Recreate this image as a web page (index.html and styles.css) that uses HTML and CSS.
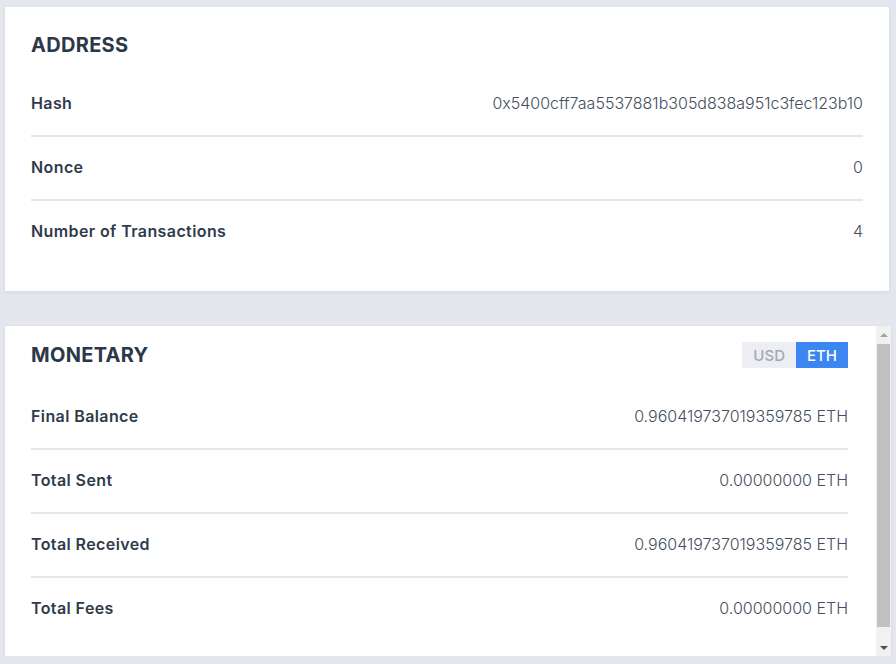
FILE: index.html
```html
<!DOCTYPE html>
<html lang="en">
<head>
    <meta charset="UTF-8">
    <title>Address</title>
    <link rel="stylesheet" href="styles.css">
</head>
<body>
    <div class="card">
        <h2 class="card-title">ADDRESS</h2>
        <div class="row">
            <span class="label">Hash</span>
            <span class="value">0x5400cff7aa5537881b305d838a951c3fec123b10</span>
        </div>
        <div class="row">
            <span class="label">Nonce</span>
            <span class="value">0</span>
        </div>
        <div class="row">
            <span class="label">Number of Transactions</span>
            <span class="value">4</span>
        </div>
    </div>

    <div class="card monetary">
        <div class="scroll-content">
            <div class="card-header">
                <h2 class="card-title">MONETARY</h2>
                <div class="toggle">
                    <button class="toggle-btn">USD</button>
                    <button class="toggle-btn selected">ETH</button>
                </div>
            </div>
            <div class="row">
                <span class="label">Final Balance</span>
                <span class="value">0.960419737019359785 ETH</span>
            </div>
            <div class="row">
                <span class="label">Total Sent</span>
                <span class="value">0.00000000 ETH</span>
            </div>
            <div class="row">
                <span class="label">Total Received</span>
                <span class="value">0.960419737019359785 ETH</span>
            </div>
            <div class="row">
                <span class="label">Total Fees</span>
                <span class="value">0.00000000 ETH</span>
            </div>
        </div>
        <!-- scrollbar drawn by hand, headless hides the native one -->
        <div class="scrollbar">
            <div class="arrow up"></div>
            <div class="track"><div class="thumb"></div></div>
            <div class="arrow down"></div>
        </div>
    </div>
</body>
</html>
```

FILE: styles.css
```css
* {
    margin: 0;
    padding: 0;
    box-sizing: border-box;
}

body {
    font-family: Inter, "Open Sans", sans-serif;
    background: #e4e7ee;
    color: #2f3b4b;
    padding: 7px 5px 0 5px;
}

.card {
    width: 884px;
    background: #fff;
    padding: 26px 26px 28px;
    box-shadow: 0 1px 4px rgba(40, 50, 80, 0.08);
}

.card-title {
    font-size: 20px;
    font-weight: 700;
    line-height: 24px;
    letter-spacing: 0.3px;
    color: #2c3848;
    margin-bottom: 16px;
}

.row {
    display: flex;
    justify-content: space-between;
    align-items: center;
    padding: 20px 0 22px;
    line-height: 20px;
    border-bottom: 2px solid #e3e6eb;
}

.row:last-child {
    border-bottom: none;
}

.label {
    font-size: 16px;
    font-weight: 600;
    letter-spacing: 0.4px;
    color: #2f3b4b;
}

.value {
    font-size: 16px;
    font-weight: 300;
    color: #444e5d;
}

.monetary {
    width: 886px;
    height: 330px;
    margin-top: 35px;
    padding: 0;
    display: flex;
}

.scroll-content {
    flex: 1;
    overflow: hidden;
    padding: 16px 28px 0 26px;
}

.card-header {
    display: flex;
    justify-content: space-between;
    align-items: center;
    margin-bottom: 18px;
}

.card-header .card-title {
    margin-bottom: 0;
}

.toggle {
    display: flex;
}

.toggle-btn {
    font-family: inherit;
    font-size: 15px;
    font-weight: 500;
    border: none;
    height: 26px;
    padding: 0 11px;
    background: #eceef3;
    color: #a2a8b3;
}

.toggle-btn.selected {
    background: #3b86f1;
    color: #fff;
}

.scrollbar {
    width: 15px;
    display: flex;
    flex-direction: column;
    background: #f1f1f1;
}

.arrow {
    height: 17px;
    display: flex;
    align-items: center;
    justify-content: center;
}

.arrow::before {
    content: '';
    border-left: 4px solid transparent;
    border-right: 4px solid transparent;
}

.arrow.up::before {
    border-bottom: 4px solid #a3a3a3;
}

.arrow.down::before {
    border-top: 4px solid #505050;
}

.track {
    flex: 1;
    padding: 1px 1px 12px;
}

.thumb {
    height: 100%;
    background: #c1c1c1;
}
```
